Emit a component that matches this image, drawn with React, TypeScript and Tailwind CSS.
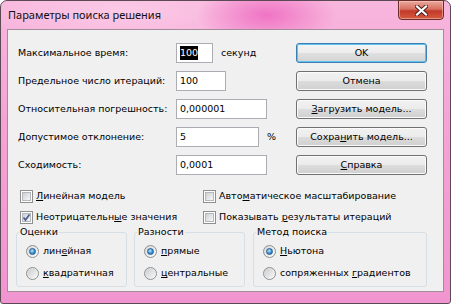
import React from "react";

const U = ({ children }: { children: React.ReactNode }) => (
  <span className="underline underline-offset-1">{children}</span>
);

const CheckBox = ({ checked }: { checked?: boolean }) => (
  <span className="relative flex h-[13px] w-[13px] shrink-0 items-center justify-center border border-[#8e8f8f] bg-white">
    <span className="h-[9px] w-[9px] border border-[#b4b8bd] bg-[linear-gradient(135deg,#cdd0d5,#f7f7f7)]" />
    {checked && (
      <svg className="absolute left-[1px] top-[1px]" width="9" height="9" viewBox="0 0 9 9">
        <path d="M1.5 4.5 L3.5 7 L7.5 1.5" fill="none" stroke="#4a5f8f" strokeWidth="1.7" />
      </svg>
    )}
  </span>
);

const Radio = ({ on }: { on?: boolean }) => (
  <span className="flex h-[13px] w-[13px] shrink-0 items-center justify-center rounded-full border border-[#8e8f8f] bg-[linear-gradient(135deg,#d5d7da,#fcfcfc)]">
    {on ? (
      <span className="h-[7px] w-[7px] rounded-full border border-[#245e92] bg-[radial-gradient(circle_at_40%_35%,#c2e8fc,#3a90d0_55%,#1b5c96)]" />
    ) : (
      <span className="h-[9px] w-[9px] rounded-full bg-[linear-gradient(135deg,#cbced2,#f6f6f6)]" />
    )}
  </span>
);

const Btn = ({ children, primary }: { children: React.ReactNode; primary?: boolean }) => (
  <div
    className={
      primary
        ? "flex h-[20px] w-[131px] items-center justify-center rounded-[3px] border border-[#3c7fb1] bg-[linear-gradient(to_bottom,#f4f4f4_0%,#ededed_50%,#e0e0e0_50%,#d3d3d3_100%)] shadow-[inset_0_0_0_1px_#5fc3f2]"
        : "flex h-[20px] w-[131px] items-center justify-center rounded-[3px] border border-[#707070] bg-[linear-gradient(to_bottom,#f2f2f2_0%,#ebebeb_50%,#dddddd_50%,#cfcfcf_100%)] shadow-[inset_0_0_0_1px_#fbfbfb]"
    }
  >
    {children}
  </div>
);

const Field = ({
  label,
  value,
  width,
  suffix,
  selected,
}: {
  label: string;
  value: string;
  width: string;
  suffix?: string;
  selected?: boolean;
}) => (
  <div className="flex h-[20px] items-center">
    <span className="w-[158px] shrink-0">{label}</span>
    <div className={`flex h-[20px] items-center border border-[#abadb3] bg-white pl-[3px] ${width}`}>
      {selected ? <span className="bg-black text-white">{value}</span> : <span>{value}</span>}
    </div>
    {suffix && <span className="ml-[8px]">{suffix}</span>}
  </div>
);

const Group = ({
  title,
  width,
  items,
}: {
  title: string;
  width: string;
  items: React.ReactNode[];
}) => (
  <fieldset className={`h-[62px] rounded-[3px] border border-[#d5dfe5] ${width}`}>
    <legend className="ml-[2px] px-[1px] leading-[14px]">{title}</legend>
    <div className="flex flex-col gap-[6px] pl-[9px] pt-[4px]">
      {items.map((it, i) => (
        <div key={i} className="flex h-[16px] items-center gap-[4px]">
          <Radio on={i === 0} />
          <span>{it}</span>
        </div>
      ))}
    </div>
  </fieldset>
);

export default function App() {
  return (
    <div className="h-[304px] w-[451px] bg-white font-['DejaVu_Sans','Liberation_Sans',sans-serif] text-[9.5px] text-black">
      <div className="flex h-[304px] w-[451px] flex-col rounded-t-[7px] rounded-b-[3px] border border-[#5b4a55] bg-[linear-gradient(to_bottom,#f8b6dd_0%,#f5a3d6_40%,#f195d0_100%)] px-[6px] pb-[11px]">
        <div className="-mx-[6px] flex h-[28px] items-center justify-between rounded-t-[6px] bg-[radial-gradient(ellipse_70px_30px_at_265px_14px,rgba(238,104,192,0.85),transparent),radial-gradient(ellipse_160px_40px_at_120px_10px,rgba(252,206,232,0.8),transparent)] pl-[7px] pr-[6px]">
          <span className="font-['Noto_Sans','Open_Sans',sans-serif] text-[11px] text-[#111]">
            Параметры поиска решения
          </span>
          <div className="-mt-[1px] flex h-[20px] w-[46px] items-center justify-center self-start rounded-b-[4px] border border-[#6a2b2b] bg-[linear-gradient(to_bottom,#eaa99f_0%,#d7705f_45%,#c2392c_55%,#d55a3c_100%)] shadow-[inset_0_0_0_1px_rgba(255,210,200,0.5)]">
            <svg width="13" height="11" viewBox="0 0 13 11">
              <path d="M2 1.5 L11 9.5 M11 1.5 L2 9.5" stroke="#4a1d1a" strokeWidth="4" strokeLinecap="square" />
              <path d="M2 1.5 L11 9.5 M11 1.5 L2 9.5" stroke="#ffffff" strokeWidth="2.2" strokeLinecap="square" />
            </svg>
          </div>
        </div>

        <div className="flex h-[263px] flex-col border border-[#a28c99] bg-[#f0f0f0] pt-[13px]">
          <div className="flex">
            <div className="ml-[10px] flex w-[278px] flex-col gap-[8px]">
              <Field label="Максимальное время:" value="100" width="w-[37px]" suffix="секунд" selected />
              <Field label="Предельное число итераций:" value="100" width="w-[50px]" />
              <Field label="Относительная погрешность:" value="0,000001" width="w-[91px]" />
              <Field label="Допустимое отклонение:" value="5" width="w-[83px]" suffix="%" />
              <Field label="Сходимость:" value="0,0001" width="w-[91px]" />
            </div>
            <div className="flex flex-col gap-[8px]">
              <Btn primary>OK</Btn>
              <Btn>Отмена</Btn>
              <Btn>
                <U>З</U>агрузить модель...
              </Btn>
              <Btn>
                Сохра<U>н</U>ить модель...
              </Btn>
              <Btn>
                <U>С</U>правка
              </Btn>
            </div>
          </div>

          <div className="ml-[12px] mt-[13px] grid grid-cols-[183px_1fr] gap-y-[5px]">
            <div className="flex h-[16px] items-center gap-[3px]">
              <CheckBox />
              <span>
                <U>Л</U>инейная модель
              </span>
            </div>
            <div className="flex h-[16px] items-center gap-[3px]">
              <CheckBox />
              <span>
                Авто<U>м</U>атическое масштабирование
              </span>
            </div>
            <div className="flex h-[16px] items-center gap-[3px]">
              <CheckBox checked />
              <span>
                Неотрицательн<U>ы</U>е значения
              </span>
            </div>
            <div className="flex h-[16px] items-center gap-[3px]">
              <CheckBox />
              <span>
                Показывать <U>р</U>езультаты итераций
              </span>
            </div>
          </div>

          <div className="ml-[8px] flex">
            <Group
              title="Оценки"
              width="w-[111px]"
              items={[
                <>
                  лин<U>е</U>йная
                </>,
                <>
                  <U>к</U>вадратичная
                </>,
              ]}
            />
            <div className="ml-[7px]">
              <Group
                title="Разности"
                width="w-[111px]"
                items={[
                  <>
                    <U>п</U>рямые
                  </>,
                  <>
                    <U>ц</U>ентральные
                  </>,
                ]}
              />
            </div>
            <div className="ml-[8px]">
              <Group
                title="Метод поиска"
                width="w-[174px]"
                items={[
                  <>
                    <U>Н</U>ьютона
                  </>,
                  <>
                    сопряженных <U>г</U>радиентов
                  </>,
                ]}
              />
            </div>
          </div>
        </div>
      </div>
    </div>
  );
}
